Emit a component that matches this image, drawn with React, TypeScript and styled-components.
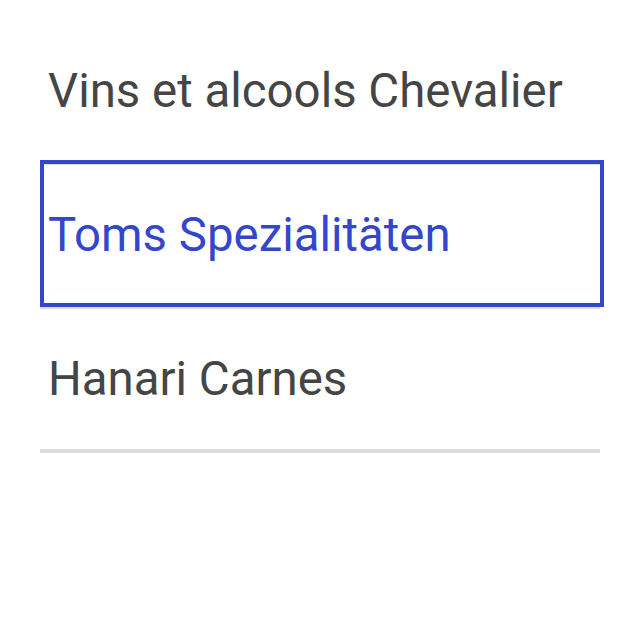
import React from "react";
import styled, { createGlobalStyle } from "styled-components";

const GlobalStyle = createGlobalStyle`
  html, body {
    margin: 0;
    padding: 0;
    background: #ffffff;
  }
  body {
    font-family: Roboto, "Liberation Sans", Arial, sans-serif;
  }
`;

const List = styled.ul`
  list-style: none;
  margin: 0;
  padding: 21px 40px 0 40px;
  width: 560px;
`;

const Item = styled.li<{ $focused?: boolean }>`
  position: relative;
  display: flex;
  align-items: center;
  height: 140px;
  padding: 0 8px;
  border-bottom: 4px solid #dcdcdc;
  font-size: 47.4px;
  font-weight: 400;
  color: ${(p) => (p.$focused ? "#3447cc" : "#454545")};
  white-space: nowrap;

  ${(p) =>
    p.$focused
      ? `
    &::after {
      content: "";
      position: absolute;
      top: -5px;
      left: 0;
      right: -4px;
      bottom: -2px;
      border: 4px solid #3447cc;
      pointer-events: none;
    }
  `
      : ""}
`;

const items = ["Vins et alcools Chevalier", "Toms Spezialitäten", "Hanari Carnes"];

export default function App() {
  return (
    <>
      <GlobalStyle />
      <List role="listbox">
        {items.map((name, i) => (
          <Item key={name} $focused={i === 1} role="option" aria-selected={i === 1}>
            {name}
          </Item>
        ))}
      </List>
    </>
  );
}
